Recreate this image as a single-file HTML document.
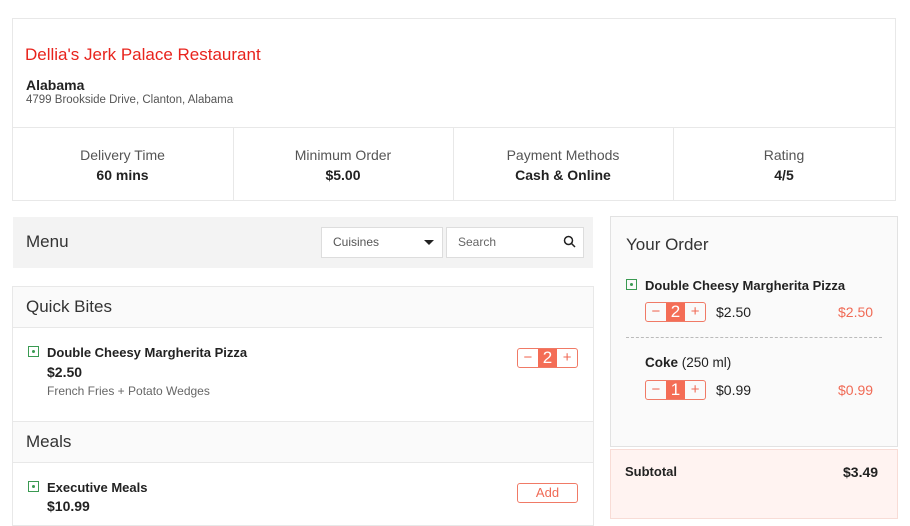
<!DOCTYPE html>
<html><head><style>
*{margin:0;padding:0;box-sizing:border-box}
body{width:910px;height:512px;overflow:hidden;background:#fff;font-family:"Liberation Sans",sans-serif;color:#222;position:relative}
.a{position:absolute}
.box{position:absolute;border:1px solid #e8e8e8}
.ctr{text-align:center}
.b{font-weight:bold;font-size:13px}
.veg{position:absolute;width:11px;height:11px;border:1px solid #3a9a52;}
.veg:after{content:"";position:absolute;left:3px;top:3px;width:3px;height:3px;border-radius:50%;background:#3a9a52}
.qty{position:absolute;width:61px;height:20px;border:1px solid #f07a66;border-radius:3px;display:flex;color:#f06a55;font-size:15px;overflow:hidden}
.qty span{flex:1;text-align:center;line-height:18px}
.qty .n{background:#f46d56;color:#fff;font-size:17px}
</style></head><body>
<div class="box" style="left:12px;top:18px;width:884px;height:183px"></div>
<div class="a" style="left:25px;top:45px;font-size:17px;color:#e8231c">Dellia's Jerk Palace Restaurant</div>
<div class="a b" style="left:26px;top:77px;font-size:14px">Alabama</div>
<div class="a" style="left:26px;top:94px;font-size:11.5px;color:#555">4799 Brookside Drive, Clanton, Alabama</div>
<div class="a" style="left:12px;top:127px;width:884px;height:1px;background:#e8e8e8"></div>
<div class="a" style="left:233px;top:128px;width:1px;height:72px;background:#e8e8e8"></div>
<div class="a" style="left:453px;top:128px;width:1px;height:72px;background:#e8e8e8"></div>
<div class="a" style="left:673px;top:128px;width:1px;height:72px;background:#e8e8e8"></div>
<div class="a ctr" style="left:12px;top:147px;width:221px;font-size:14px;color:#555">Delivery Time</div>
<div class="a ctr b" style="left:12px;top:167px;width:221px;font-size:14px">60 mins</div>
<div class="a ctr" style="left:233px;top:147px;width:220px;font-size:14px;color:#555">Minimum Order</div>
<div class="a ctr b" style="left:233px;top:167px;width:220px;font-size:14px">$5.00</div>
<div class="a ctr" style="left:453px;top:147px;width:220px;font-size:14px;color:#555">Payment Methods</div>
<div class="a ctr b" style="left:453px;top:167px;width:220px;font-size:14px">Cash &amp; Online</div>
<div class="a ctr" style="left:673px;top:147px;width:222px;font-size:14px;color:#555">Rating</div>
<div class="a ctr b" style="left:673px;top:167px;width:222px;font-size:14px">4/5</div>

<div class="a" style="left:13px;top:217px;width:580px;height:51px;background:#f3f3f3"></div>
<div class="a" style="left:26px;top:232px;font-size:17px;color:#333">Menu</div>
<div class="a" style="left:321px;top:227px;width:122px;height:31px;background:#fff;border:1px solid #ddd"></div>
<div class="a" style="left:333px;top:235px;font-size:12px;color:#555">Cuisines</div>
<div class="a" style="left:424px;top:240px;border-left:5px solid transparent;border-right:5px solid transparent;border-top:5px solid #222"></div>
<div class="a" style="left:446px;top:227px;width:138px;height:31px;background:#fff;border:1px solid #ddd"></div>
<div class="a" style="left:458px;top:235px;font-size:12px;color:#666">Search</div>
<svg class="a" style="left:563px;top:235px" width="13" height="13" viewBox="0 0 13 13"><circle cx="5.5" cy="5.5" r="4" fill="none" stroke="#222" stroke-width="1.5"/><path d="M8.5 8.5L12 12" stroke="#222" stroke-width="1.5"/></svg>

<div class="box" style="left:12px;top:286px;width:582px;height:240px"></div>
<div class="a" style="left:13px;top:287px;width:580px;height:41px;background:#fafafa;border-bottom:1px solid #e8e8e8"></div>
<div class="a" style="left:26px;top:297px;font-size:17px;color:#333">Quick Bites</div>
<div class="veg" style="left:28px;top:346px"></div>
<div class="a b" style="left:47px;top:345px">Double Cheesy Margherita Pizza</div>
<div class="a b" style="left:47px;top:364px;font-size:14px">$2.50</div>
<div class="a" style="left:47px;top:384px;font-size:12px;color:#666">French Fries + Potato Wedges</div>
<div class="qty" style="left:517px;top:348px"><span>−</span><span class="n">2</span><span>+</span></div>
<div class="a" style="left:13px;top:421px;width:580px;height:42px;background:#fafafa;border-top:1px solid #e8e8e8;border-bottom:1px solid #e8e8e8"></div>
<div class="a" style="left:26px;top:432px;font-size:17px;color:#333">Meals</div>
<div class="veg" style="left:28px;top:481px"></div>
<div class="a b" style="left:47px;top:480px">Executive Meals</div>
<div class="a b" style="left:47px;top:498px;font-size:14px">$10.99</div>
<div class="a ctr" style="left:517px;top:483px;width:61px;height:20px;border:1px solid #f07a66;border-radius:3px;color:#f06a55;font-size:13px;line-height:18px">Add</div>

<div class="a" style="left:610px;top:216px;width:288px;height:231px;background:#fafafa;border:1px solid #e2e2e2"></div>
<div class="a" style="left:626px;top:235px;font-size:17px;color:#333">Your Order</div>
<div class="veg" style="left:626px;top:279px"></div>
<div class="a b" style="left:645px;top:278px">Double Cheesy Margherita Pizza</div>
<div class="qty" style="left:645px;top:302px"><span>−</span><span class="n">2</span><span>+</span></div>
<div class="a" style="left:716px;top:304px;font-size:14px">$2.50</div>
<div class="a" style="left:838px;top:304px;font-size:14px;color:#f06a55">$2.50</div>
<div class="a" style="left:626px;top:337px;width:256px;border-top:1px dashed #bbb"></div>
<div class="a" style="left:645px;top:355px;font-size:13.5px"><b>Coke</b> (250 ml)</div>
<div class="qty" style="left:645px;top:380px"><span>−</span><span class="n">1</span><span>+</span></div>
<div class="a" style="left:716px;top:382px;font-size:14px">$0.99</div>
<div class="a" style="left:838px;top:382px;font-size:14px;color:#f06a55">$0.99</div>
<div class="a" style="left:610px;top:449px;width:288px;height:70px;background:#fff3f1;border:1px solid #f8dcd6"></div>
<div class="a b" style="left:625px;top:464px">Subtotal</div>
<div class="a b" style="left:843px;top:464px;font-size:14px">$3.49</div>
</body></html>
